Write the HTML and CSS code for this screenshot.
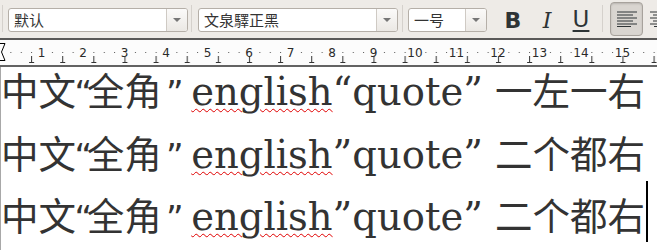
FILE: index.html
```html
<!DOCTYPE html>
<html lang="zh">
<head>
    <meta charset="UTF-8">
    <title>Writer</title>
    <link rel="stylesheet" href="styles.css">
</head>
<body>
    <div class="toolbar">
        <span class="sep"></span>
        <div class="combo c1"><span class="combo-text">默认</span><span class="combo-btn"><i class="arrow"></i></span></div>
        <span class="sep s2"></span>
        <div class="combo c2"><span class="combo-text">文泉驛正黑</span><span class="combo-btn"><i class="arrow"></i></span></div>
        <span class="sep s3"></span>
        <div class="combo c3"><span class="combo-text">一号</span><span class="combo-btn"><i class="arrow"></i></span></div>
        <span class="fmt fmt-b">B</span>
        <span class="fmt fmt-i">I</span>
        <span class="fmt fmt-u"><span class="u">U</span></span>
        <span class="sep s4"></span>
        <span class="align pressed">
            <svg width="20" height="16" viewBox="0 0 20 16">
                <path d="M0 1H20M0 4H16M0 7H20M0 10H16M0 13H20M0 15.5H14" stroke="#2e3436" stroke-width="1.2"/>
            </svg>
        </span>
        <span class="align plain">
            <svg width="20" height="16" viewBox="0 0 20 16">
                <path d="M0 1H20M3 4H17M0 7H20M3 10H17M0 13H20M4 15.5H16" stroke="#2e3436" stroke-width="1.2"/>
            </svg>
        </span>
    </div>

    <div class="ruler">
        <svg width="657" height="25" viewBox="0 0 657 25">
            <defs>
                <pattern id="dots" width="10.375" height="25" patternUnits="userSpaceOnUse">
                    <rect x="0" y="12" width="1" height="1" fill="#555"/>
                </pattern>
                <pattern id="tabs" x="-3" width="31.125" height="25" patternUnits="userSpaceOnUse">
                    <path d="M3.5 16V22M1 22.5H6" stroke="#333" stroke-width="1"/>
                </pattern>
            </defs>
            <rect x="8" width="649" height="25" fill="url(#dots)"/>
            <g class="nums" text-anchor="middle">
                <text x="41.5" y="17">1</text>
                <text x="83" y="17">2</text>
                <text x="124.5" y="17">3</text>
                <text x="166" y="17">4</text>
                <text x="207.5" y="17">5</text>
                <text x="249" y="17">6</text>
                <text x="290.5" y="17">7</text>
                <text x="332" y="17">8</text>
                <text x="373.5" y="17">9</text>
                <text x="415" y="17">10</text>
                <text x="456.5" y="17">11</text>
                <text x="498" y="17">12</text>
                <text x="539.5" y="17">13</text>
                <text x="581" y="17">14</text>
                <text x="622.5" y="17">15</text>
            </g>
            <rect x="20" width="637" height="25" fill="url(#tabs)"/>
            <path d="M0 3.5H5L1.5 12L5 20.5H0" fill="#fff" stroke="#000" stroke-width="1"/>
        </svg>
    </div>

    <div class="doc">
        <div class="line"><span class="han">中文<span class="q ql">“</span>全角<span class="q qr">”</span></span> <span class="typo">english</span>“quote” <span class="han">一左一右</span></div>
        <div class="line"><span class="han">中文<span class="q ql">“</span>全角<span class="q qr">”</span></span> <span class="typo">english</span>”quote” <span class="han">二个都右</span></div>
        <div class="line"><span class="han">中文<span class="q ql">“</span>全角<span class="q qr">”</span></span> <span class="typo">english</span>”quote” <span class="han">二个都右</span><span class="caret"></span></div>
    </div>
</body>
</html>
```

FILE: styles.css
```css
*{
    box-sizing: border-box;
}
body{
    margin: 0;
    width: 657px;
    height: 250px;
    overflow: hidden;
    background: #fff;
    font-family: "DejaVu Sans", "Noto Sans CJK SC", sans-serif;
}

/* toolbar */
.toolbar{
    height: 40px;
    display: flex;
    align-items: flex-start;
    padding-left: 2px;
    background: #eeebe7;
    border-bottom: 2px solid #5a5958;
    overflow: hidden;
}
.sep{
    flex: none;
    width: 1px;
    height: 27px;
    margin-top: 5px;
    background: #d5d1cc;
}
.s2{ margin-left: 3px; }
.s3{ margin-left: 4px; }
.s4{ margin-left: 4px; }

.combo{
    flex: none;
    display: flex;
    height: 24px;
    margin-top: 8px;
    border: 1px solid #b5afa8;
    border-radius: 3px;
    background: #fff;
    overflow: hidden;
}
.c1{ width: 180px; margin-left: 5px; }
.c2{ width: 200px; margin-left: 6px; }
.c3{ width: 79px; margin-left: 5px; }
.combo-text{
    flex: 1;
    padding-left: 5px;
    font: 15px/22px "Noto Sans CJK SC", sans-serif;
    color: #333;
    white-space: nowrap;
}
.combo-btn{
    width: 21px;
    display: flex;
    align-items: center;
    justify-content: center;
    border-left: 1px solid #cfcac4;
    background: linear-gradient(#fbfaf9, #ebe8e4);
}
.arrow{
    width: 0;
    height: 0;
    border-left: 4px solid transparent;
    border-right: 4px solid transparent;
    border-top: 4px solid #767676;
}

.fmt{
    flex: none;
    width: 34px;
    height: 38px;
    text-align: center;
    color: #2e3436;
}
.fmt-b{
    margin-left: 9px;
    padding-top: 2px;
    font: bold 22px/38px "DejaVu Sans", sans-serif;
}
.fmt-i{
    padding-top: 2px;
    font: italic 22px/38px "DejaVu Serif", serif;
}
.fmt-u{
    font: 23px/38px "DejaVu Sans", sans-serif;
}
.u{
    text-decoration: underline;
    text-decoration-thickness: 2px;
    text-underline-offset: 3px;
}

.align{
    flex: none;
    width: 33px;
    height: 34px;
    margin-top: 2px;
    margin-left: 7px;
    display: flex;
    align-items: center;
    justify-content: center;
}
.pressed{
    border: 1px solid #a7a29c;
    border-radius: 4px;
    background: #d9d5d0;
    box-shadow: inset 0 1px 2px rgba(0, 0, 0, 0.15);
}
.plain{
    justify-content: flex-start;
}

/* ruler */
.ruler{
    height: 27px;
    background: #fcfcfc;
    border-bottom: 2px solid #636363;
}
.ruler svg{
    display: block;
}
.nums text{
    font-family: "DejaVu Sans", sans-serif;
    font-size: 12px;
    fill: #2a2a2a;
    stroke: #fcfcfc;
    stroke-width: 4px;
    paint-order: stroke;
}

/* document */
.doc{
    height: 183px;
    display: flex;
    flex-direction: column;
    gap: 12.5px;
    border-left: 1px solid #a8a8a8;
    font-family: "DejaVu Serif", "Noto Sans CJK SC", serif;
    font-size: 38.5px;
    color: #333;
    white-space: nowrap;
}
.line{
    line-height: 50px;
}
.han{
    font-family: "Noto Sans CJK SC", sans-serif;
    font-size: 37.5px;
    line-height: 40px;
}
.q{
    font-family: "DejaVu Sans", sans-serif;
    font-size: 34px;
}
.ql{
    margin-left: -1.5px;
    margin-right: -5.4px;
}
.qr{
    margin-left: 4.2px;
    margin-right: -4.6px;
}
.typo{
    text-decoration: underline wavy #e00000;
    text-decoration-thickness: 1px;
    text-underline-offset: 3px;
}
.caret{
    display: inline-block;
    width: 2px;
    height: 61px;
    margin-top: -11px;
    margin-left: 1px;
    vertical-align: -12px;
    background: #000;
}
```
